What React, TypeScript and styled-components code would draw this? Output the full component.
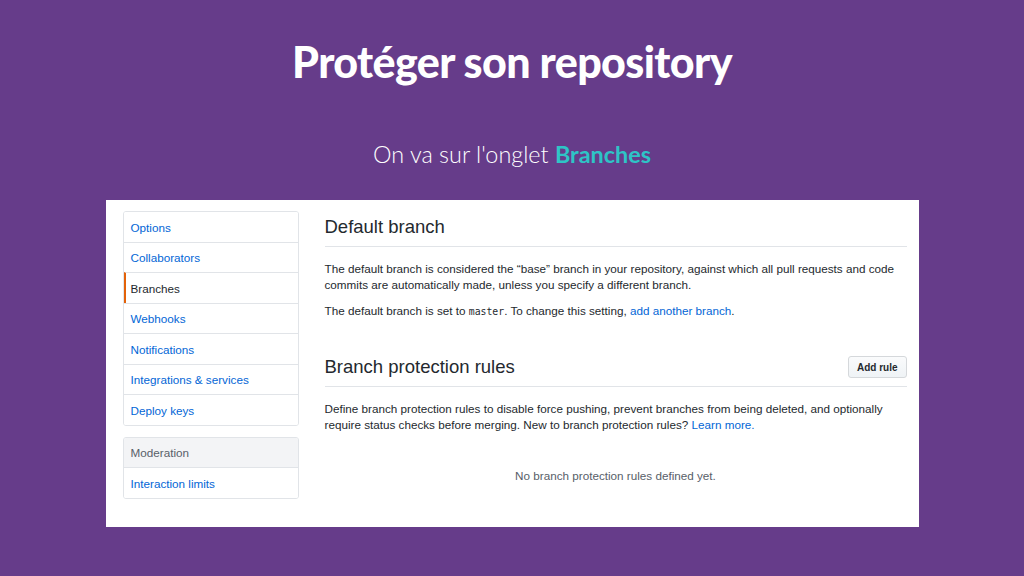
import React from "react";
import styled, { createGlobalStyle } from "styled-components";

const Global = createGlobalStyle`
  html, body { margin: 0; padding: 0; background: #663c8a; }
  body { width: 1024px; height: 576px; overflow: hidden; }
`;

const Slide = styled.div`
  width: 1024px;
  height: 576px;
  display: flex;
  flex-direction: column;
  align-items: center;
  background: #663c8a;
`;

const Title = styled.h1`
  margin: 32px 0 0;
  height: 60px;
  line-height: 60px;
  font-family: Lato, "Open Sans", sans-serif;
  font-weight: 900;
  font-size: 43px;
  letter-spacing: -0.6px;
  color: #ffffff;
`;

const Subtitle = styled.p`
  margin: 47px 0 0;
  line-height: 30px;
  font-family: Lato, "Open Sans", sans-serif;
  font-weight: 300;
  font-size: 23.4px;
  color: #ffffff;
`;

const Accent = styled.strong`
  font-weight: 700;
  color: #2ec4c6;
`;

const Shot = styled.div`
  margin-top: 31px;
  width: 813px;
  height: 327px;
  box-sizing: border-box;
  background: #ffffff;
  display: flex;
  gap: 26px;
  padding: 11px 12px 0 17px;
  font-family: "Liberation Sans", Arial, sans-serif;
  font-size: 11.7px;
  color: #24292e;
`;

const SideCol = styled.div`
  width: 176px;
  flex: none;
  display: flex;
  flex-direction: column;
  gap: 11px;
`;

const Menu = styled.div`
  border: 1px solid #e1e4e8;
  border-radius: 3px;
  overflow: hidden;
`;

const MenuItem = styled.div<{ $selected?: boolean; $heading?: boolean }>`
  box-sizing: border-box;
  padding: 8.5px 8px 7.5px ${(p) => (p.$selected ? "5px" : "7px")};
  line-height: 13.5px;
  border-top: 1px solid #e1e4e8;
  border-left: ${(p) => (p.$selected ? "2px solid #e36209" : "none")};
  color: ${(p) => (p.$selected ? "#24292e" : p.$heading ? "#586069" : "#0366d6")};
  background: ${(p) => (p.$heading ? "#f3f4f6" : "#ffffff")};
  &:first-child { border-top: none; }
`;

const Main = styled.div`
  flex: 1;
  padding-top: 4px;
`;

const SectionHead = styled.div<{ $first?: boolean }>`
  display: flex;
  align-items: center;
  justify-content: space-between;
  padding-bottom: 7px;
  border-bottom: 1px solid #e1e4e8;
  margin-top: ${(p) => (p.$first ? "0" : "35px")};
`;

const H2 = styled.h2`
  margin: 0;
  font-weight: 400;
  font-size: 18.5px;
  line-height: 24px;
  color: #24292e;
`;

const Para = styled.p<{ $first?: boolean }>`
  margin: ${(p) => (p.$first ? "14px" : "10px")} 0 0;
  line-height: 16px;
`;

const Code = styled.code`
  font-family: "DejaVu Sans Mono", "Liberation Mono", monospace;
  font-size: 9.8px;
`;

const Link = styled.a`
  color: #0366d6;
  text-decoration: none;
`;

const Button = styled.button`
  height: 22px;
  padding: 0 8px;
  font-family: "Liberation Sans", Arial, sans-serif;
  font-size: 10px;
  font-weight: 700;
  color: #24292e;
  background: linear-gradient(#fafbfc, #eff3f6);
  border: 1px solid #d5d8db;
  border-radius: 3px;
`;

const Empty = styled.p`
  margin: 35px 0 0;
  line-height: 16px;
  text-align: center;
  color: #586069;
`;

export default function App() {
  return (
    <>
      <Global />
      <Slide>
        <Title>Protéger son repository</Title>
        <Subtitle>
          On va sur l'onglet <Accent>Branches</Accent>
        </Subtitle>
        <Shot>
          <SideCol>
            <Menu>
              <MenuItem>Options</MenuItem>
              <MenuItem>Collaborators</MenuItem>
              <MenuItem $selected>Branches</MenuItem>
              <MenuItem>Webhooks</MenuItem>
              <MenuItem>Notifications</MenuItem>
              <MenuItem>Integrations &amp; services</MenuItem>
              <MenuItem>Deploy keys</MenuItem>
            </Menu>
            <Menu>
              <MenuItem $heading>Moderation</MenuItem>
              <MenuItem>Interaction limits</MenuItem>
            </Menu>
          </SideCol>
          <Main>
            <SectionHead $first>
              <H2>Default branch</H2>
            </SectionHead>
            <Para $first>
              The default branch is considered the “base” branch in your repository, against which all pull requests and code
              commits are automatically made, unless you specify a different branch.
            </Para>
            <Para>
              The default branch is set to <Code>master</Code>. To change this setting, <Link>add another branch</Link>.
            </Para>
            <SectionHead>
              <H2>Branch protection rules</H2>
              <Button>Add rule</Button>
            </SectionHead>
            <Para $first>
              Define branch protection rules to disable force pushing, prevent branches from being deleted, and optionally
              require status checks before merging. New to branch protection rules? <Link>Learn more.</Link>
            </Para>
            <Empty>No branch protection rules defined yet.</Empty>
          </Main>
        </Shot>
      </Slide>
    </>
  );
}
